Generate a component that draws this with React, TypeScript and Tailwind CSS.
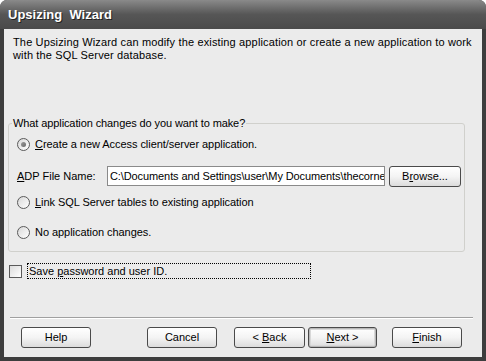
const Radio = ({ checked }: { checked?: boolean }) => (
  <span className="flex h-[13px] w-[13px] shrink-0 items-center justify-center rounded-full border border-[#5a5a5a] bg-gradient-to-br from-[#d8d8d8] to-white">
    {checked && <span className="h-[5px] w-[5px] rounded-full bg-gradient-to-br from-[#9a9a9a] to-[#6a6a6a]" />}
  </span>
);

const Btn = ({ children, def, className = "" }: { children: React.ReactNode; def?: boolean; className?: string }) => (
  <button
    className={`flex h-[21px] items-center justify-center rounded-[3px] border border-[#4a4a4a] bg-gradient-to-b from-white via-[#f4f4f4] to-[#dcdcdc] text-[11px] text-black ${
      def ? "shadow-[inset_0_0_0_1px_#b8b8b8,inset_0_0_0_2px_#d8d8d8]" : ""
    } ${className}`}
  >
    <span>{children}</span>
  </button>
);

export default function App() {
  return (
    <div className="flex h-[361px] w-[486px] flex-col rounded-t-[7px] bg-[#3d3d3d] font-['Liberation_Sans',Arial,sans-serif] text-[11px] leading-[13px] text-black">
      <div className="flex h-[29px] shrink-0 items-center rounded-t-[7px] bg-gradient-to-b from-[#8a8a8a] via-[#565656] to-[#4a4a4a] pl-[8px] text-[13px] font-bold text-white [text-shadow:1px_1px_0_#222]">
        Upsizing&nbsp; Wizard
      </div>
      <div className="mx-[4px] mb-[4px] flex flex-1 flex-col bg-[#ebebeb]">
        <p className="whitespace-nowrap pl-[9px] pt-[7px] tracking-[0.15px]">
          The Upsizing Wizard can modify the existing application or create a new application to work
          <br />
          with the SQL Server database.
        </p>

        <div className="ml-[4px] mt-[61px] flex h-[129px] w-[457px] flex-col rounded-[3px] border border-[#d0d0cc]">
          <span className="-mt-[7px] ml-[3px] w-fit bg-[#ebebeb] px-[1px] tracking-[-0.1px]">
            What application changes do you want to make?
          </span>
          <div className="ml-[8px] mt-[4px] flex h-[20px] items-center gap-[5px] tracking-[-0.05px]">
            <Radio checked />
            <span>
              <u>C</u>reate a new Access client/server application.
            </span>
          </div>
          <div className="ml-[8px] mt-[12px] flex h-[20px] items-center">
            <span className="w-[90px]">
              <u>A</u>DP File Name:
            </span>
            <div className="flex h-[20px] w-[278px] items-center overflow-hidden whitespace-nowrap border border-[#8a8a8a] bg-white pl-[2px] tracking-[-0.1px]">
              C:\Documents and Settings\user\My Documents\thecorne
            </div>
            <Btn className="ml-[4px] h-[20px] w-[72px]">
              B<u>r</u>owse...
            </Btn>
          </div>
          <div className="ml-[8px] mt-[6px] flex h-[20px] items-center gap-[5px] tracking-[-0.05px]">
            <Radio />
            <span>
              <u>L</u>ink SQL Server tables to existing application
            </span>
          </div>
          <div className="ml-[8px] mt-[10px] flex h-[20px] items-center gap-[5px] tracking-[-0.05px]">
            <Radio />
            <span>No application changes.</span>
          </div>
        </div>

        <div className="ml-[5px] mt-[11px] flex h-[16px] items-center gap-[5px]">
          <span className="h-[13px] w-[13px] border border-[#5a5a5a] bg-gradient-to-br from-[#dcdcdc] to-white" />
          <span className="flex h-[16px] w-[284px] items-center border border-dotted border-black pl-[1px]">
            <span>
              Save <u>p</u>assword and user ID.
            </span>
          </span>
        </div>

        <div className="ml-[6px] mt-[38px] h-[2px] w-[463px] border-b border-t border-b-white border-t-[#a0a0a0]" />

        <div className="mt-[8px] flex items-center">
          <Btn className="ml-[17px] w-[70px]">Help</Btn>
          <Btn className="ml-[56px] w-[70px]">Cancel</Btn>
          <Btn className="ml-[17px] w-[71px]">
            &lt; <u>B</u>ack
          </Btn>
          <Btn def className="ml-[3px] w-[69px]">
            <u>N</u>ext &gt;
          </Btn>
          <Btn className="ml-[15px] w-[70px]">
            <u>F</u>inish
          </Btn>
        </div>
      </div>
    </div>
  );
}
